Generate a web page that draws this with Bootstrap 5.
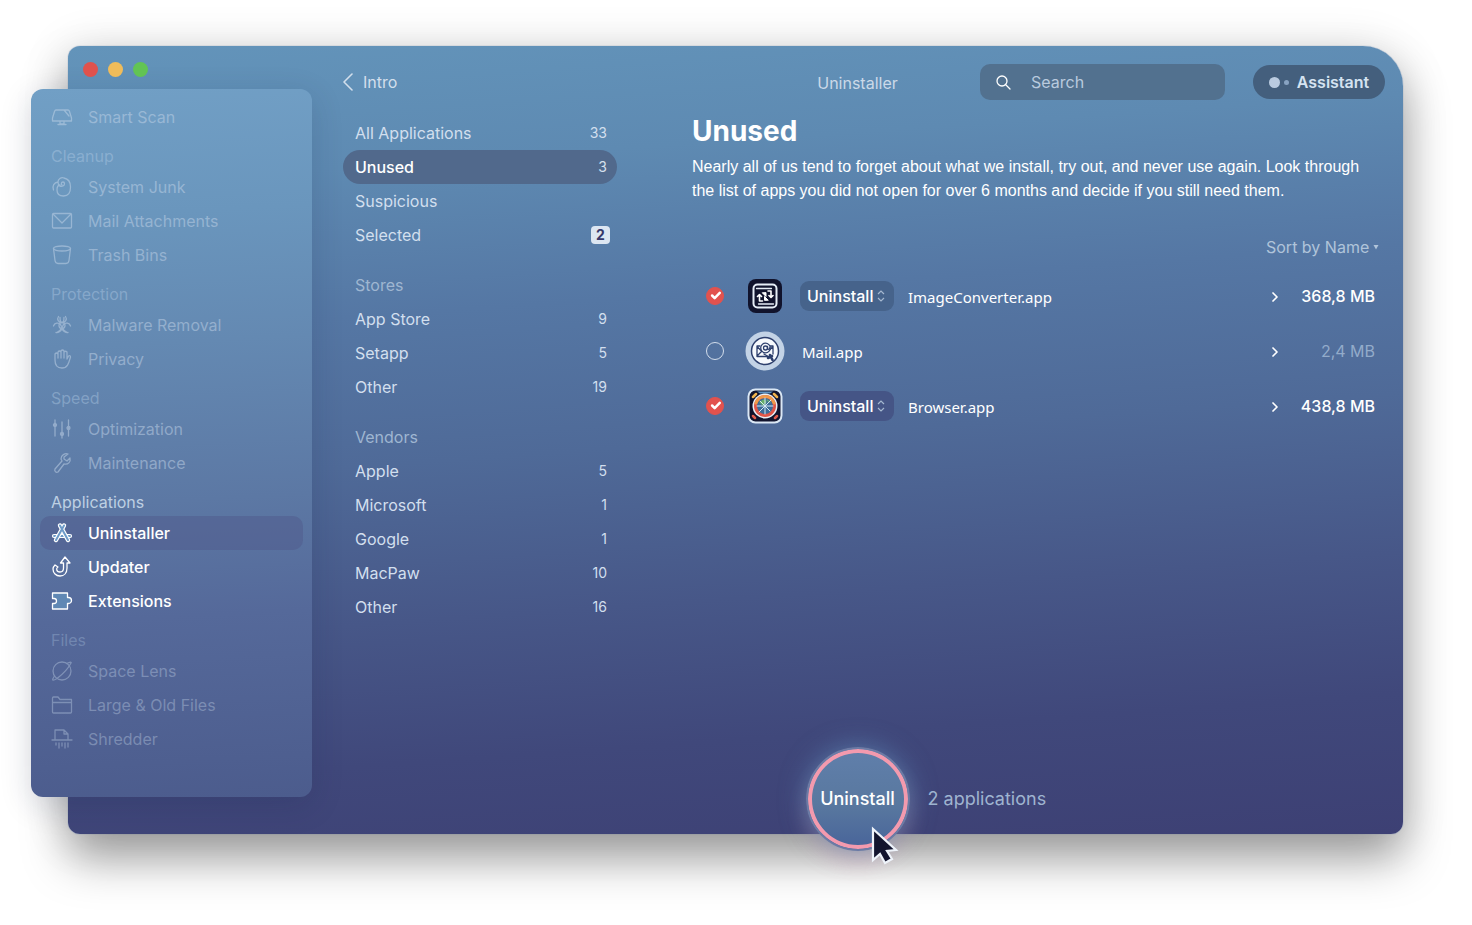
<!DOCTYPE html>
<html lang="en">
<head>
<meta charset="utf-8">
<meta name="viewport" content="width=device-width, initial-scale=1">
<title>Uninstaller</title>
<link href="https://cdn.jsdelivr.net/npm/bootstrap@5.3.0/dist/css/bootstrap.min.css" rel="stylesheet">
<style>
body{font-family:Inter,"Liberation Sans",sans-serif;font-size:16px;line-height:24px;background:#fff;color:#fff}
.stage{padding:46px 69px 91px 68px}
.app-window{border-radius:12px 40px 12px 12px;background:linear-gradient(176deg,#6394ba 0%,#5e8ab2 16%,#5577a4 33%,#4f6a98 50%,#475788 68%,#40487b 84%,#3d4074 100%);box-shadow:0 0 1px #51709d,0 26px 46px rgba(0,0,0,.34),0 4px 48px rgba(0,0,0,.14)}
.side-col{width:244px}
.lights{height:43px;padding:16px 0 0 15px;gap:10px}
.light{width:15px;height:15px;border-radius:50%;background:#62c454}
.light-close{background:#e0524d}.light-min{background:#f0bc5a}
.side-panel{margin:0 0 37px -37px;padding:11px 9px 41px;border-radius:12px;background:linear-gradient(177deg,#719fc5 0%,#6a96bd 18%,#6489b2 36%,#5c78a4 58%,#55699a 74%,#4c5c8d 100%);box-shadow:0 8px 32px rgba(20,30,70,.16)}
.side-title{height:36px;padding:12px 0 4px 11px;line-height:20px;font-size:16px;font-weight:400;margin:0;color:rgba(180,205,230,.42)}
.side-title.on{color:#bed0e3}
.side-link{height:34px;padding-left:12px;gap:16px;border-radius:10px;color:rgba(195,212,232,.5);text-decoration:none}
.side-link svg{width:20px;height:20px;overflow:visible}
.side-link:not(.live) svg{color:#c3d4e8;opacity:.52}
.side-link.live{color:#fff;font-weight:500}
.side-link.current{background:rgba(80,90,140,.5)}
.files{opacity:.76}
svg{fill:none;stroke:currentColor;stroke-width:1.3;stroke-linejoin:round;stroke-linecap:round;flex:none}
.top-bar{display:grid;grid-template-columns:1fr auto 1fr;align-items:center;height:72px;padding:0 18px}
.top-bar .back{margin-left:13px;gap:10px;color:#d3dfec;text-decoration:none;width:max-content}
.bar-title{font-size:16px;line-height:24px;font-weight:400;color:#cbd9e8;margin:0;padding-top:2px}
.search{width:245px;height:36px;border-radius:10px;background:#52718f;padding:0 16px;gap:20px}
.search input{background:none;border:0;outline:0;color:#fff;padding:0;min-width:0}
.search input::placeholder{color:#b9cade;opacity:1}
.assist{height:34px;width:132px;border-radius:17px;background:#445f7d;color:#d5e3f1;font-weight:600;border:0;padding:0}
.dot-l{width:11px;height:11px;border-radius:50%;background:#bacbe0}
.dot-s{width:5px;height:5px;border-radius:50%;background:#88a3c2}
.filters{width:274px;margin:-2px 75px 0 31px}
.filter-title{height:34px;margin:16px 0 0;padding:5px 12px;font-size:16px;line-height:24px;font-weight:400;color:#9fb6d1}
.filter{height:34px;padding:0 10px 0 12px;border-radius:17px;color:#d2dfee;text-decoration:none}
.filter small{font-size:14px}
.filter.current{background:#51698c;color:#fff;font-weight:500}
.filter.current small{color:#d5e0ee;font-weight:400}
.tally{width:19px;height:18px;margin-right:-3px;line-height:18px;font-size:14px;font-weight:700;border-radius:4px;background:#dce6f2;color:#37396b;text-align:center}
.main-col{padding-right:18px;margin-top:-2px}
.main-col h1{font-size:28px;line-height:32px;font-weight:700;margin:-1px 0 8px}
.intro{font-family:"Liberation Sans",Arial,sans-serif;font-size:16px;line-height:24px;max-width:676px;margin:0}
.plain-select{appearance:none;border:0;background-color:transparent;background-repeat:no-repeat;color:inherit}
.sort{width:119px;height:24px;margin:32px 0 0;padding:0;color:#b0c4da;background-image:url("data:image/svg+xml,%3Csvg xmlns='http://www.w3.org/2000/svg' viewBox='0 0 6 6'%3E%3Cpath d='M.5 1h5L3 5.500z' fill='%23b0c4da'/%3E%3C/svg%3E");background-size:6px 6px;background-position:right 6px center}
.apps{margin:9px 0 0;width:100%;font-size:16px}
.apps td{height:55px;padding:0;vertical-align:middle}
.c-check{width:46px}.c-icon{width:62px}.c-more{width:30px}.c-size{width:84px}
.pick.form-check-input{display:block;width:18px;height:18px;margin:0 0 0 14px;border-radius:50%;border:1px solid #d3deec;background-color:transparent;box-shadow:none}
.pick.form-check-input:checked{background-color:#e2524e;border-color:#e2524e;background-size:17px 17px}
.c-icon svg{display:block;margin-left:7px}
.act{width:94px;height:30px;border-radius:9px;padding:0 0 0 7px;font-weight:500;background-color:#46638b;background-image:url("data:image/svg+xml,%3Csvg xmlns='http://www.w3.org/2000/svg' viewBox='0 0 8 12' fill='none' stroke='%23a5b8d0' stroke-width='1.200'%3E%3Cpath d='M1 4l3-3 3 3M1 8l3 3 3-3'/%3E%3C/svg%3E");background-size:8px 12px;background-position:right 9px center}
.act.deep{background-color:#455586}
.act-row{gap:14px}
.app-name{font-family:"Noto Sans","Open Sans",sans-serif;font-size:15px;line-height:20px;padding-top:3px}
.app-name.solo{padding-left:2px}
.c-size{text-align:right;padding-right:10px!important;font-weight:500;white-space:nowrap}
.c-size.dim{font-weight:400;color:#93abca}
.bare{border:0;background:none;color:#fff;padding:0;display:block}
.foot{display:grid;grid-template-columns:1fr auto 1fr;align-items:center;padding:0 18px;margin:auto 0 -17px;column-gap:18px}
.go-wrap{position:relative}
.go{display:block;width:104px;height:104px;border-radius:50%;padding:0;border:2px solid #6c7ba5;color:#fff;font-size:18px;font-weight:500;background:linear-gradient(#607fab,#59789f 55%,#48649a);box-shadow:inset 0 0 0 4px #f39aae,0 0 26px rgba(96,145,190,.65),0 14px 20px rgba(225,130,145,.24)}
.pointer{position:absolute;left:64px;top:79px}
.count{font-size:18px;color:#9fb4d0}
</style>
</head>
<body>
<div class="stage">
<div class="app-window d-flex">
  <div class="side-col flex-shrink-0">
    <div class="lights d-flex"><span class="light light-close"></span><span class="light light-min"></span><span class="light"></span></div>
    <nav class="side-panel" aria-label="Modules">
      <a href="#" class="side-link d-flex align-items-center"><svg viewBox="0 0 20 20"><path d="M4 3h12q1 0 1.500 1.500L19.500 11v3H.5v-3l2-6.500Q3 3 4 3zM12 3l5 6M8 14v3h4v-3M6 17.500h8"/></svg>Smart Scan</a>
      <h2 class="side-title">Cleanup</h2>
      <a href="#" class="side-link d-flex align-items-center"><svg viewBox="0 0 20 20"><path d="M1.500 13C0 9 2 5.500 6 5c0-3 3-5 6-4 5 1 6.500 5 6.500 9 0 6-2 9-7 9-4.500 0-6.500-2-6.500-6 0-3 1-5 3-5M6 5c0 4 3 5 5 4s2-4 0-4-2 2-1 3"/></svg>System Junk</a>
      <a href="#" class="side-link d-flex align-items-center"><svg viewBox="0 0 20 20"><rect x=".5" y="2.500" width="19" height="14.500" rx="1"/><path d="M1.500 3.500L10 12l8.500-8.500"/></svg>Mail Attachments</a>
      <a href="#" class="side-link d-flex align-items-center"><svg viewBox="0 0 20 20"><ellipse cx="10" cy="3.500" rx="8.500" ry="2.500"/><path d="M1.500 3.500l1.500 12Q3.500 18.500 6 18.500h8q2.500 0 3-3l1.500-12"/></svg>Trash Bins</a>
      <h2 class="side-title">Protection</h2>
      <a href="#" class="side-link d-flex align-items-center"><svg viewBox="0 0 20 20"><circle cx="10" cy="10.500" r="3"/><path d="M6.500 1.500c-2 3 0 6 3.500 6s5.500-3 3.500-6M8 2.500c0 3 1 5 2 5s2-2 2-5M1.500 11c1-3 5-4 7-1.500s1 5.500-3 7.500M18.500 11c-1-3-5-4-7-1.500s-1 5.500 3 7.500M4 17.500c2 .5 5-1 6-4 1 3 4 4.500 6 4"/></svg>Malware Removal</a>
      <a href="#" class="side-link d-flex align-items-center"><svg viewBox="0 0 20 20"><path d="M3 11V5q1.500-2 3 0v4-6q1.300-2 3 0v6-7q1.500-2 3 0v7-6q1.500-1.500 3 0v7l1.500-3q2-1 2 1C17 13 16 19 10 19c-5 0-7-3-7-8z"/></svg>Privacy</a>
      <h2 class="side-title">Speed</h2>
      <a href="#" class="side-link d-flex align-items-center"><svg viewBox="0 0 20 20"><path d="M3 1v16M10 3v16M16.500 1v16"/><g fill="currentColor"><circle cx="3" cy="6" r="1.500"/><circle cx="10" cy="15" r="1.500"/><circle cx="16.500" cy="9" r="1.500"/></g></svg>Optimization</a>
      <a href="#" class="side-link d-flex align-items-center"><svg viewBox="0 0 20 20"><path d="M16 1c-3-1-7 1-7 5l1 2-7 8c-1 2 1 4 3 3l6-8c4 1 7-2 6-6l-3 3-3-2V4z"/></svg>Maintenance</a>
      <h2 class="side-title on">Applications</h2>
      <a href="#" class="side-link live current d-flex align-items-center" aria-current="page"><svg viewBox="0 0 20 20"><path style="stroke-width:4.200" d="M2 13h16"/><path stroke="#6d9bc9" style="stroke-width:1.800" d="M2 13h16"/><path style="stroke-width:4.400" d="M12 2.500L4 17M8 2.500L16 17"/><path stroke="#6d9bc9" style="stroke-width:2" d="M12 2.500L4 17M8 2.500L16 17"/></svg>Uninstaller</a>
      <a href="#" class="side-link live d-flex align-items-center"><svg viewBox="0 0 20 20"><path d="M8.500 6L13 0l5 6h-3v5c0 5-3 8-7 8s-7-3-7-7c0-2 1-3 2-4l3 2c-2 1-2 5 2 5 2 0 3.500-1 3.500-4V6z"/></svg>Updater</a>
      <a href="#" class="side-link live d-flex align-items-center"><svg viewBox="0 0 20 20"><path fill="#6088b4" d="M.5 2h15v4.500h1a2.500 2.500 0 1 1 0 6h-1V18H.5v-5.500h1.500a2.500 2.500 0 0 0 0-5H.5z"/></svg>Extensions</a>
      <div class="files">
      <h2 class="side-title">Files</h2>
      <a href="#" class="side-link d-flex align-items-center"><svg viewBox="0 0 20 20"><circle cx="10" cy="10" r="9"/><path d="M2.500 15C-1 20 1 20 5 17.500 11 13 17 6 19 2q1-2-4.500.500"/></svg>Space Lens</a>
      <a href="#" class="side-link d-flex align-items-center"><svg viewBox="0 0 20 20"><path d="M.5 3q0-1 1-1h4.500l2 2.500h11.500V17q0 1-1 1h-17q-1 0-1-1zM.5 7.500h19"/></svg>Large &amp; Old Files</a>
      <a href="#" class="side-link d-flex align-items-center"><svg viewBox="0 0 20 20"><path d="M3 11V1h9l4 4v6M12 1v4h4M0 11h20M4 14v2M7 14v5M10 14v3M13 14v5M16 14v4"/></svg>Shredder</a>
      </div>
    </nav>
  </div>
  <div class="flex-grow-1 d-flex flex-column">
    <header class="top-bar">
      <a href="#" class="back d-flex align-items-center"><svg width="10" height="20" viewBox="0 0 10 20" stroke="#fff"><path d="M9 2L1 10l8 8" style="stroke-width:1.600"/></svg>Intro</a>
      <h2 class="bar-title">Uninstaller</h2>
      <div class="d-flex align-items-center justify-content-end">
        <label class="search d-flex align-items-center me-4"><svg width="15" height="15" viewBox="0 0 15 15" stroke="#fff" aria-hidden="true"><circle cx="6" cy="6" r="5"/><path d="M9.500 9.500L14 14"/></svg><input type="search" class="flex-grow-1" placeholder="Search" aria-label="Search"></label>
        <button type="button" class="assist d-flex align-items-center justify-content-center ms-1"><span class="dot-l me-1"></span><span class="dot-s me-1"></span><span class="ms-1">Assistant</span></button>
      </div>
    </header>
    <div class="d-flex">
      <nav class="filters flex-shrink-0" aria-label="Filters">
        <a href="#" class="filter d-flex align-items-center justify-content-between">All Applications<small>33</small></a>
        <a href="#" class="filter current d-flex align-items-center justify-content-between" aria-current="true">Unused<small>3</small></a>
        <a href="#" class="filter d-flex align-items-center justify-content-between">Suspicious</a>
        <a href="#" class="filter d-flex align-items-center justify-content-between">Selected<span class="tally">2</span></a>
        <h3 class="filter-title">Stores</h3>
        <a href="#" class="filter d-flex align-items-center justify-content-between">App Store<small>9</small></a>
        <a href="#" class="filter d-flex align-items-center justify-content-between">Setapp<small>5</small></a>
        <a href="#" class="filter d-flex align-items-center justify-content-between">Other<small>19</small></a>
        <h3 class="filter-title">Vendors</h3>
        <a href="#" class="filter d-flex align-items-center justify-content-between">Apple<small>5</small></a>
        <a href="#" class="filter d-flex align-items-center justify-content-between">Microsoft<small>1</small></a>
        <a href="#" class="filter d-flex align-items-center justify-content-between">Google<small>1</small></a>
        <a href="#" class="filter d-flex align-items-center justify-content-between">MacPaw<small>10</small></a>
        <a href="#" class="filter d-flex align-items-center justify-content-between">Other<small>16</small></a>
      </nav>
      <main class="main-col flex-grow-1">
        <h1>Unused</h1>
        <p class="intro">Nearly all of us tend to forget about what we install, try out, and never use again. Look through the list of apps you did not open for over 6 months and decide if you still need them.</p>
        <div class="d-flex justify-content-end"><select class="plain-select sort" aria-label="Sort order"><option>Sort by Name</option></select></div>
        <table class="apps">
          <tbody>
          <tr>
            <td class="c-check"><input type="checkbox" class="pick form-check-input" checked aria-label="ImageConverter.app"></td>
            <td class="c-icon"><svg width="40" height="40" viewBox="0 0 40 40"><rect x="3" y="3" width="34" height="34" rx="8" fill="#11132c" stroke="none"/><rect x="8.500" y="8.500" width="23" height="23" rx="4" fill="#11132c" stroke="#e6edf6" style="stroke-width:2"/><path d="M11.500 12.500h15M28.500 28h-15" stroke="#e6edf6"/><path d="M14.500 25v-6M12.500 20.500l2-2 2 2M26 15v6M24 19.500l2 2 2-2M14.500 25h3M26 15h-3" stroke="#fff" style="stroke-width:1.600"/><path d="M17.500 17l3.500 3.500V17zM23 24l-3.500-3.500V24z" fill="#fff" stroke="#fff" style="stroke-width:1"/></svg></td>
            <td><div class="act-row d-flex align-items-center"><select class="plain-select act" aria-label="Action for ImageConverter.app"><option>Uninstall</option></select><span class="app-name">ImageConverter.app</span></div></td>
            <td class="c-more"><button type="button" class="bare" aria-label="Details of ImageConverter.app"><svg width="8" height="10" viewBox="0 0 8 10"><path d="M2 1l4 4-4 4" style="stroke-width:1.700"/></svg></button></td>
            <td class="c-size">368,8 MB</td>
          </tr>
          <tr>
            <td class="c-check"><input type="checkbox" class="pick form-check-input" aria-label="Mail.app"></td>
            <td class="c-icon"><svg width="40" height="40" viewBox="0 0 40 40"><circle cx="20" cy="20" r="19.500" fill="#c3d3e6" stroke="none"/><circle cx="20" cy="20" r="13.500" fill="#f6f9fd" stroke="#2d3f6d" style="stroke-width:1.500"/><g stroke="#2d3f6d"><path d="M15 15h-3v10.500h13M25 15h3v8M12 15.500l5 5M28 15.500l-4 4M12 25l5-5"/><circle cx="20.500" cy="17" r="4.800" fill="#f6f9fd"/><circle cx="20.500" cy="17" r="2"/><path d="M22.500 15.500v2.500q2 1 2-1M19 23l5 3"/><path style="stroke-width:2.600" d="M25 24l2.500 5M23 27l4-2"/></g></svg></td>
            <td><div class="app-name solo">Mail.app</div></td>
            <td class="c-more"><button type="button" class="bare" aria-label="Details of Mail.app"><svg width="8" height="10" viewBox="0 0 8 10"><path d="M2 1l4 4-4 4" style="stroke-width:1.700"/></svg></button></td>
            <td class="c-size dim">2,4 MB</td>
          </tr>
          <tr>
            <td class="c-check"><input type="checkbox" class="pick form-check-input" checked aria-label="Browser.app"></td>
            <td class="c-icon"><svg width="40" height="40" viewBox="0 0 40 40"><rect x="3.500" y="3.500" width="33" height="33" rx="7" fill="#11132c" stroke="#dbe8f5" style="stroke-width:2"/><path d="M12 5.500h16l-3 2h-10z" fill="#5b93c4" stroke="none"/><path d="M8 11l3-3M29 8l3 3" stroke="#efb24d" style="stroke-width:2.500"/><path d="M8 30l2 2M32 30l-2 2" stroke="#dd5a4c" style="stroke-width:2.500"/><circle cx="20" cy="20" r="12.500" fill="#e8eff7" stroke="none"/><circle cx="20" cy="20" r="9.500" fill="#3d6c99" stroke="#df5548" style="stroke-width:3"/><path d="M11 17a9.500 9.500 0 0 1 18 0" stroke="#ef9a4b" style="stroke-width:3"/><path d="M15 16l4-2 2 2-3 3zM22 14l3 2" fill="#69b06a" stroke="#69b06a"/><path d="M20 12v16M12 20h16M14 26L26 14M15 15l10 10" stroke="#d5e8f5" style="stroke-width:1"/></svg></td>
            <td><div class="act-row d-flex align-items-center"><select class="plain-select act deep" aria-label="Action for Browser.app"><option>Uninstall</option></select><span class="app-name">Browser.app</span></div></td>
            <td class="c-more"><button type="button" class="bare" aria-label="Details of Browser.app"><svg width="8" height="10" viewBox="0 0 8 10"><path d="M2 1l4 4-4 4" style="stroke-width:1.700"/></svg></button></td>
            <td class="c-size">438,8 MB</td>
          </tr>
          </tbody>
        </table>
      </main>
    </div>
    <footer class="foot">
      <span></span>
      <div class="go-wrap"><button type="button" class="go">Uninstall</button>
        <svg class="pointer" width="30" height="40" viewBox="0 0 30 40" aria-hidden="true"><path d="M3 3v31l7-6 5 9 7-4-5-8 9-1z" fill="#12142e" stroke="#eef3fa" style="stroke-width:2.200;stroke-linejoin:miter"/></svg></div>
      <span class="count">2 applications</span>
    </footer>
  </div>
</div>
</div>
<script src="https://cdn.jsdelivr.net/npm/bootstrap@5.3.0/dist/js/bootstrap.bundle.min.js"></script>
</body>
</html>
